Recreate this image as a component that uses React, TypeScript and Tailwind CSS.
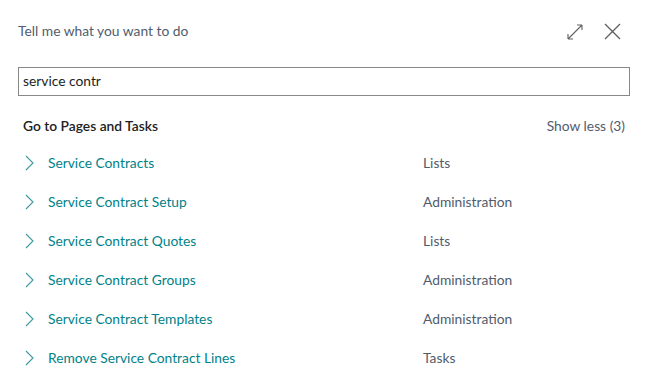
const rows = [
  { name: "Service Contracts", cat: "Lists" },
  { name: "Service Contract Setup", cat: "Administration" },
  { name: "Service Contract Quotes", cat: "Lists" },
  { name: "Service Contract Groups", cat: "Administration" },
  { name: "Service Contract Templates", cat: "Administration" },
  { name: "Remove Service Contract Lines", cat: "Tasks" },
]

function Chevron() {
  return (
    <svg width="10" height="16" viewBox="0 0 10 16" className="shrink-0">
      <path d="M2 1 L9 8 L2 15" fill="none" stroke="#3a9aa0" strokeWidth="1.1" />
    </svg>
  )
}

export default function App() {
  return (
    <div className="h-[375px] w-[645px] overflow-hidden bg-white font-['Segoe_UI','Lato',sans-serif] text-[13.8px]">
      <div className="flex h-[62px] items-center justify-between pl-[18px] pr-[24px] pt-[1px]">
        <span className="text-[#505c6d]">Tell me what you want to do</span>
        <div className="flex items-center gap-[21px]">
          <svg width="16" height="16" viewBox="0 0 16 16">
            <path
              d="M1 15 L15 1 M1 15 L1 10 M1 15 L6 15 M15 1 L10 1 M15 1 L15 6"
              fill="none"
              stroke="#616161"
              strokeWidth="1.1"
            />
          </svg>
          <svg width="17" height="17" viewBox="0 0 17 17">
            <path d="M1 1 L16 16 M16 1 L1 16" fill="none" stroke="#616161" strokeWidth="1.4" />
          </svg>
        </div>
      </div>
      <div className="px-[18px] pt-[5px]">
        <div className="flex h-[29px] w-[612px] items-center border border-[#8a8886] px-[4px] text-[#201f1e]">
          service contr
        </div>
      </div>
      <div className="flex items-center justify-between pl-[23px] pr-[20px] pt-[20px]">
        <span className="font-semibold text-[#212121]">Go to Pages and Tasks</span>
        <span className="text-[#505c6d]">Show less (3)</span>
      </div>
      <div className="flex flex-col pt-[7px]">
        {rows.map((r) => (
          <div key={r.name} className="flex h-[39px] items-center pl-[24px]">
            <Chevron />
            <span className="ml-[14px] w-[375px] text-[#00828a]">{r.name}</span>
            <span className="text-[#505c6d]">{r.cat}</span>
          </div>
        ))}
      </div>
    </div>
  )
}
